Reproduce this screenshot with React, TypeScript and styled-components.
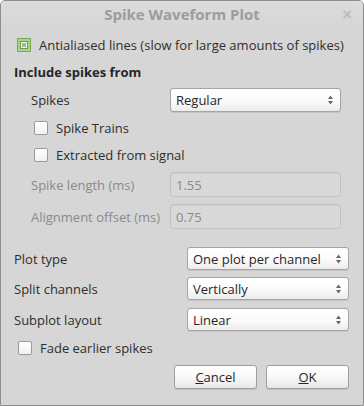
import React from "react";
import styled, { createGlobalStyle, css } from "styled-components";

const Global = createGlobalStyle`
  html, body { margin: 0; padding: 0; background: #ffffff; }
  #root { width: 364px; height: 406px; }
`;

const Window = styled.div`
  box-sizing: border-box;
  width: 364px;
  height: 406px;
  background: #d6d6d6;
  border: 1px solid #8e8e8e;
  border-radius: 5px 5px 0 0;
  font-family: "Open Sans", "Noto Sans", sans-serif;
  font-size: 13px;
  color: #2e2e2e;
  display: flex;
  flex-direction: column;
  overflow: hidden;
`;

const TitleBar = styled.div`
  position: relative;
  height: 26px;
  display: flex;
  align-items: center;
  justify-content: center;
  font-weight: bold;
  font-size: 15px;
  color: #9c9c9c;
  background: linear-gradient(#dcdcdc, #d6d6d6);
  flex-shrink: 0;
`;

const Close = styled.span`
  position: absolute;
  right: 10px;
  top: 5px;
  font-size: 14px;
  color: #bcbcbc;
  font-weight: bold;
  font-family: "DejaVu Sans", sans-serif;
`;

const Body = styled.div`
  display: flex;
  flex-direction: column;
  padding: 0 14px 0 13px;
`;

const Row = styled.div<{ $top: number; $h: number; $indent?: number }>`
  display: flex;
  align-items: center;
  margin-top: ${(p) => p.$top}px;
  height: ${(p) => p.$h}px;
  padding-left: ${(p) => p.$indent ?? 0}px;
`;

const FormRow = styled.div<{ $top: number; $h: number; $indent: number; $label: number; $field: number }>`
  display: grid;
  grid-template-columns: ${(p) => p.$label}px ${(p) => p.$field}px;
  align-items: center;
  margin-top: ${(p) => p.$top}px;
  height: ${(p) => p.$h}px;
  padding-left: ${(p) => p.$indent}px;
`;

const Label = styled.span<{ $disabled?: boolean }>`
  color: ${(p) => (p.$disabled ? "#8a8a8a" : "#2e2e2e")};
  white-space: nowrap;
`;

const Heading = styled.span`
  font-weight: bold;
  color: #262626;
`;

const Box = styled.span`
  box-sizing: border-box;
  width: 14px;
  height: 14px;
  border: 1px solid #9a9a9a;
  border-radius: 2px;
  background: linear-gradient(#ffffff, #f1f1f1);
  margin-right: 8px;
  flex-shrink: 0;
`;

const GreenBox = styled.span`
  box-sizing: border-box;
  width: 14px;
  height: 14px;
  border: 1px solid #79a957;
  background: #a5d687;
  display: flex;
  align-items: center;
  justify-content: center;
  margin-right: 8px;
  flex-shrink: 0;
`;

const GreenInner = styled.span`
  box-sizing: border-box;
  width: 8px;
  height: 8px;
  background: #ffffff;
  border: 1px solid #6c9a4e;
  display: flex;
  align-items: center;
  justify-content: center;
`;

const fieldBase = css`
  box-sizing: border-box;
  display: flex;
  align-items: center;
  border-radius: 3px;
  padding-left: 5px;
`;

const Combo = styled.div<{ $h: number }>`
  ${fieldBase}
  height: ${(p) => p.$h}px;
  border: 1px solid #a4a4a4;
  background: linear-gradient(#ffffff 0%, #fbfbfb 55%, #ececec 100%);
  color: #262626;
  justify-content: space-between;
  padding-right: 7px;
  box-shadow: 0 1px 0 rgba(0, 0, 0, 0.08);
`;

const Edit = styled.div`
  ${fieldBase}
  height: 25px;
  border: 1px solid #c2c2c2;
  background: #d9d9d9;
  color: #8a8a8a;
  box-shadow: inset 0 1px 1px rgba(0, 0, 0, 0.05);
`;

const ButtonBar = styled.div`
  display: flex;
  justify-content: flex-end;
  gap: 9px;
  margin-top: 7px;
`;

const Button = styled.div`
  box-sizing: border-box;
  width: 83px;
  height: 24px;
  border: 1px solid #9e9e9e;
  border-radius: 3px;
  background: linear-gradient(#ffffff 0%, #f8f8f8 50%, #e8e8e8 100%);
  display: flex;
  align-items: center;
  justify-content: center;
  color: #262626;
  box-shadow: 0 1px 0 rgba(0, 0, 0, 0.1);
`;

const Arrows = () => (
  <svg width="5" height="12" viewBox="0 0 5 12">
    <path d="M2.5 1.5 L5 5 L0 5 Z" fill="#666" />
    <path d="M2.5 10.5 L5 7 L0 7 Z" fill="#666" />
  </svg>
);

const ComboBox = ({ value, h }: { value: string; h: number }) => (
  <Combo $h={h}>
    <span>{value}</span>
    <Arrows />
  </Combo>
);

export default function App() {
  return (
    <>
      <Global />
      <Window>
        <TitleBar>
          Spike Waveform Plot
          <Close>×</Close>
        </TitleBar>
        <Body>
          <Row $top={8} $h={20} $indent={3}>
            <GreenBox>
              <GreenInner>
                <svg width="6" height="6" viewBox="0 0 6 6">
                  <path d="M1 1 L5 5 M5 1 L1 5" stroke="#7d9c6a" strokeWidth="1.3" />
                </svg>
              </GreenInner>
            </GreenBox>
            <Label>Antialiased lines (slow for large amounts of spikes)</Label>
          </Row>
          <Row $top={7} $h={20} $indent={0}>
            <Heading>Include spikes from</Heading>
          </Row>
          <FormRow $top={6} $h={24} $indent={17} $label={139} $field={171}>
            <Label>Spikes</Label>
            <ComboBox value="Regular" h={24} />
          </FormRow>
          <Row $top={6} $h={20} $indent={20}>
            <Box />
            <Label>Spike Trains</Label>
          </Row>
          <Row $top={7} $h={20} $indent={20}>
            <Box />
            <Label>Extracted from signal</Label>
          </Row>
          <FormRow $top={7} $h={25} $indent={17} $label={139} $field={171}>
            <Label $disabled>Spike length (ms)</Label>
            <Edit>1.55</Edit>
          </FormRow>
          <FormRow $top={7} $h={25} $indent={17} $label={139} $field={171}>
            <Label $disabled>Alignment offset (ms)</Label>
            <Edit>0.75</Edit>
          </FormRow>
          <FormRow $top={18} $h={23} $indent={0} $label={173} $field={162}>
            <Label>Plot type</Label>
            <ComboBox value="One plot per channel" h={23} />
          </FormRow>
          <FormRow $top={7} $h={23} $indent={0} $label={173} $field={162}>
            <Label>Split channels</Label>
            <ComboBox value="Vertically" h={23} />
          </FormRow>
          <FormRow $top={8} $h={23} $indent={0} $label={173} $field={162}>
            <Label>Subplot layout</Label>
            <ComboBox value="Linear" h={23} />
          </FormRow>
          <Row $top={7} $h={20} $indent={4}>
            <Box />
            <Label>Fade earlier spikes</Label>
          </Row>
          <ButtonBar>
            <Button>
              <span><u>C</u>ancel</span>
            </Button>
            <Button>
              <span><u>O</u>K</span>
            </Button>
          </ButtonBar>
        </Body>
      </Window>
    </>
  );
}
